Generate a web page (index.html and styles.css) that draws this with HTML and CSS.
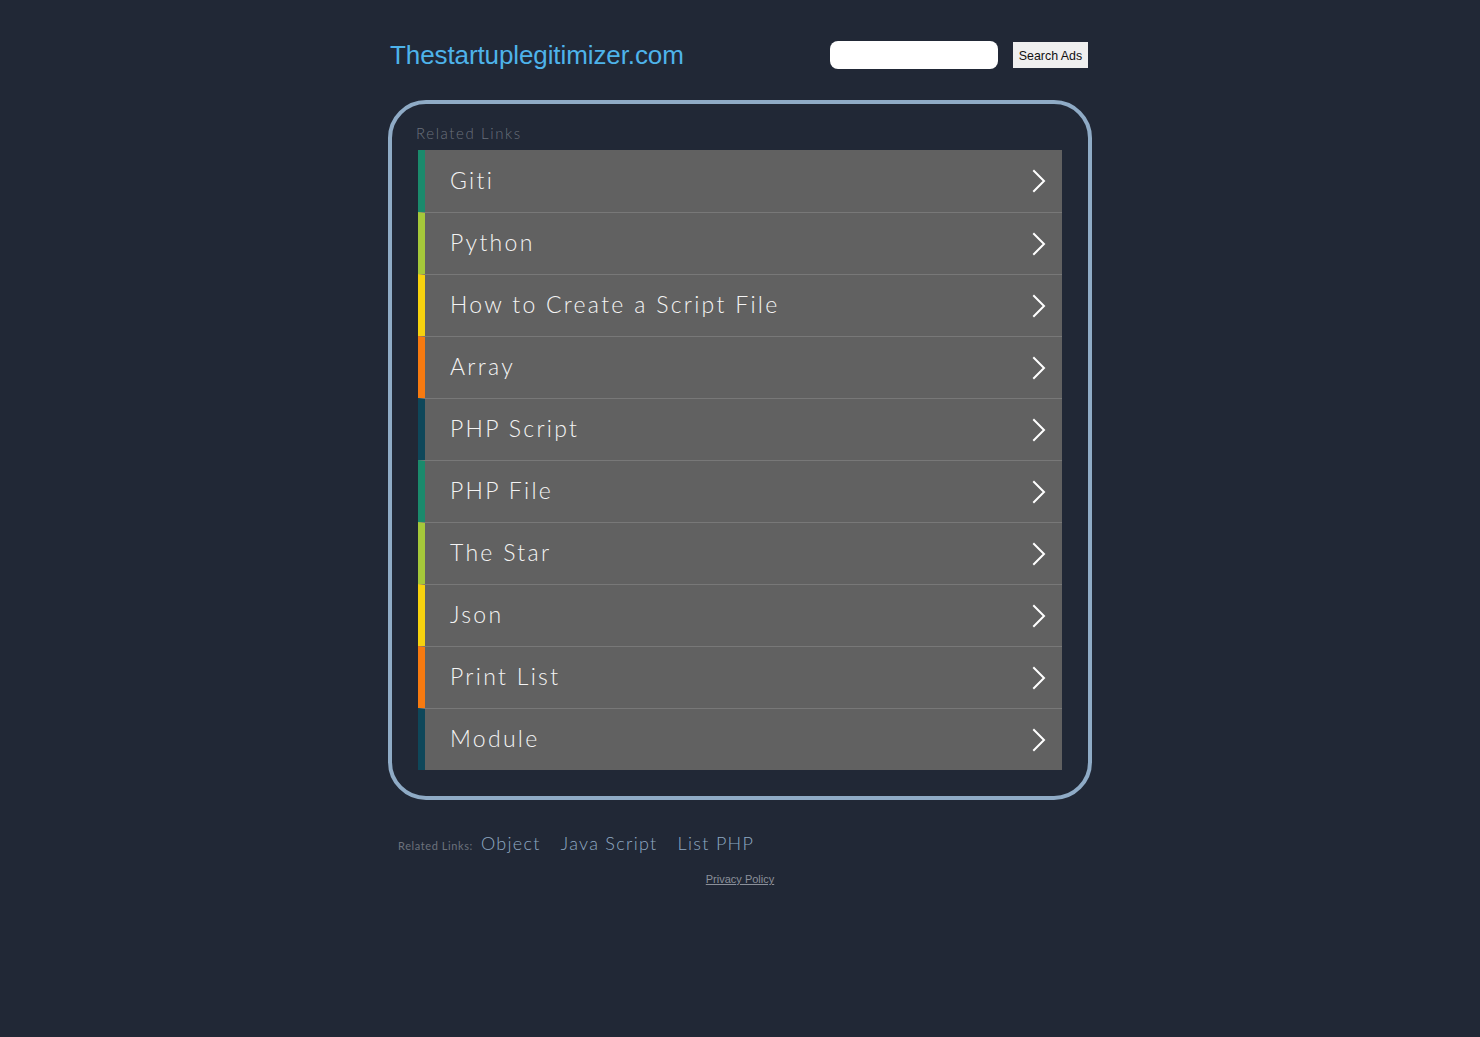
FILE: index.html
```html
<!DOCTYPE html>
<html>
<head>
<meta charset="utf-8">
<title>Thestartuplegitimizer.com</title>
<link rel="stylesheet" href="styles.css">
</head>
<body>
<div class="page">
  <header class="header">
    <a class="logo" href="#">Thestartuplegitimizer.com</a>
    <form class="search">
      <input class="search-input" type="text">
      <button class="search-btn" type="button">Search Ads</button>
    </form>
  </header>
  <section class="box">
    <div class="box-title">Related Links</div>
    <ul class="links">
      <li class="row c1"><span class="label">Giti</span><svg class="chev" viewBox="0 0 14 24"><polyline points="2,2 12,12 2,22"/></svg></li>
      <li class="row c2"><span class="label">Python</span><svg class="chev" viewBox="0 0 14 24"><polyline points="2,2 12,12 2,22"/></svg></li>
      <li class="row c3"><span class="label">How to Create a Script File</span><svg class="chev" viewBox="0 0 14 24"><polyline points="2,2 12,12 2,22"/></svg></li>
      <li class="row c4"><span class="label">Array</span><svg class="chev" viewBox="0 0 14 24"><polyline points="2,2 12,12 2,22"/></svg></li>
      <li class="row c5"><span class="label">PHP Script</span><svg class="chev" viewBox="0 0 14 24"><polyline points="2,2 12,12 2,22"/></svg></li>
      <li class="row c1"><span class="label">PHP File</span><svg class="chev" viewBox="0 0 14 24"><polyline points="2,2 12,12 2,22"/></svg></li>
      <li class="row c2"><span class="label">The Star</span><svg class="chev" viewBox="0 0 14 24"><polyline points="2,2 12,12 2,22"/></svg></li>
      <li class="row c3"><span class="label">Json</span><svg class="chev" viewBox="0 0 14 24"><polyline points="2,2 12,12 2,22"/></svg></li>
      <li class="row c4"><span class="label">Print List</span><svg class="chev" viewBox="0 0 14 24"><polyline points="2,2 12,12 2,22"/></svg></li>
      <li class="row c5"><span class="label">Module</span><svg class="chev" viewBox="0 0 14 24"><polyline points="2,2 12,12 2,22"/></svg></li>
    </ul>
  </section>
  <div class="footer-links">
    <span class="fl-title">Related Links:</span>
    <a href="#">Object</a>
    <a href="#">Java Script</a>
    <a href="#">List PHP</a>
  </div>
  <div class="privacy"><a href="#">Privacy Policy</a></div>
</div>
</body>
</html>
```
FILE: styles.css
```css
html, body {
  margin: 0;
  padding: 0;
  background: #212836;
}
body {
  font-family: "Liberation Sans", Arial, sans-serif;
}
.page {
  width: 704px;
  margin: 0 auto;
}
.header {
  height: 100px;
  display: flex;
  align-items: flex-start;
  justify-content: space-between;
}
.logo {
  margin: 40px 0 0 2px;
  font-size: 26px;
  color: #4eb3ea;
  text-decoration: none;
  letter-spacing: -0.1px;
}
.search {
  display: flex;
  align-items: center;
  margin: 41px 4px 0 0;
  gap: 15px;
}
.search-input {
  width: 168px;
  height: 28px;
  box-sizing: border-box;
  border: none;
  border-radius: 8px;
  background: #fff;
  padding: 0 8px;
}
.search-btn {
  height: 26px;
  width: 75px;
  border: none;
  background: #efefef;
  color: #111;
  font-family: "Liberation Sans", Arial, sans-serif;
  font-size: 12.4px;
  padding: 2px 0 0 0;
}
.box {
  border: 4px solid #8fabc6;
  border-radius: 38px;
  padding: 0 26px 26px 26px;
}
.box-title {
  font-family: "Lato", sans-serif;
  font-weight: 300;
  font-size: 15px;
  letter-spacing: 1.6px;
  color: #6a707b;
  height: 46px;
  line-height: 58px;
  margin-left: -2px;
  box-sizing: border-box;
}
.links {
  list-style: none;
  margin: 0;
  padding: 0;
}
.row {
  height: 61px;
  border-top: 1px solid #787878;
  background: #616161;
  display: flex;
  align-items: center;
  justify-content: space-between;
  border-left: 7px solid #1e8c6e;
  padding: 0 16px 0 25px;
}
.row:first-child {
  height: 62px;
  border-top: none;
}
.c1 { border-left-color: #1a8a6c; }
.c2 { border-left-color: #a5c83a; }
.c3 { border-left-color: #f7d20e; }
.c4 { border-left-color: #f77a10; }
.c5 { border-left-color: #0e475a; }
.label {
  font-family: "Lato", sans-serif;
  font-weight: 300;
  font-size: 23px;
  letter-spacing: 2.3px;
  color: #f4f4f4;
  margin-top: -3px;
}
.chev {
  width: 14px;
  height: 24px;
  fill: none;
  stroke: #fff;
  stroke-width: 2;
  stroke-linecap: square;
}
.footer-links {
  display: flex;
  align-items: baseline;
  gap: 20px;
  margin: 32px 0 0 10px;
}
.fl-title {
  font-family: "Lato", sans-serif;
  font-size: 11px;
  letter-spacing: 0.6px;
  color: #6c727c;
  margin-right: -12px;
}
.footer-links a {
  font-family: "Lato", sans-serif;
  font-weight: 300;
  font-size: 18px;
  letter-spacing: 1.3px;
  color: #8fa9c2;
  text-decoration: none;
}
.privacy {
  text-align: center;
  margin-top: 15px;
}
.privacy a {
  font-size: 11px;
  color: #8b909a;
}
```
